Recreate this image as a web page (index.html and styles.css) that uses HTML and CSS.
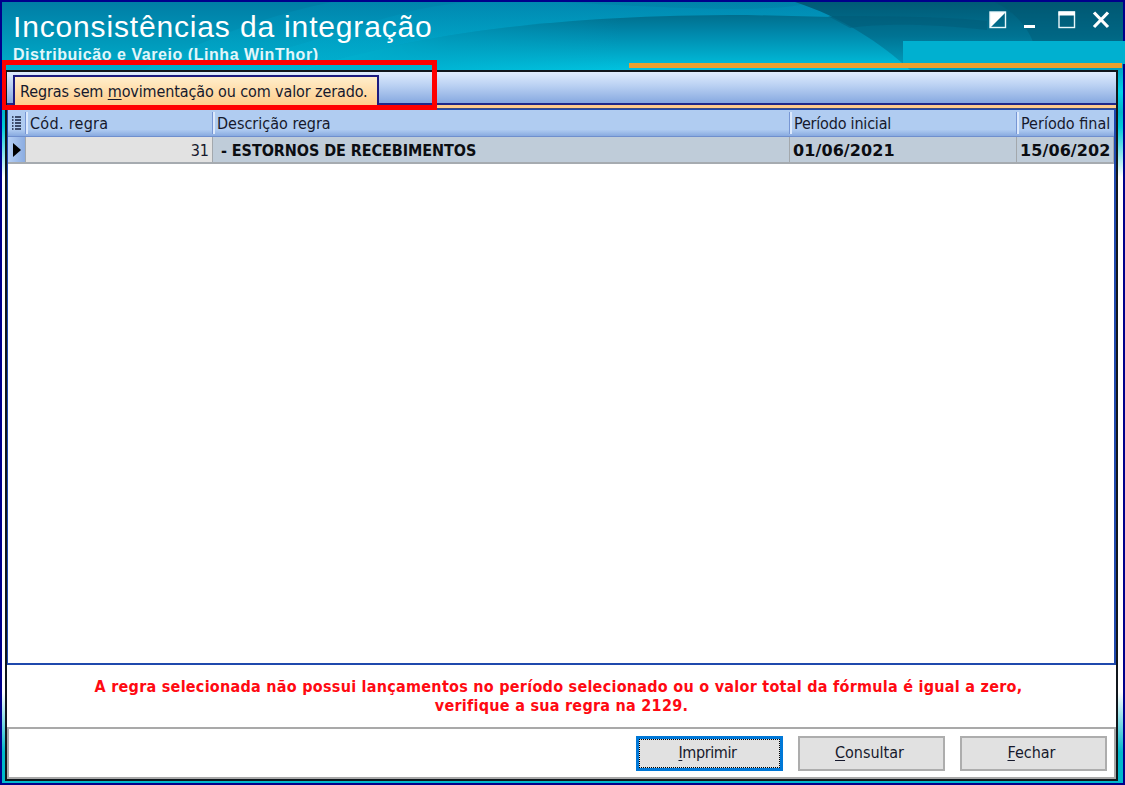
FILE: index.html
```html
<!DOCTYPE html>
<html lang="pt-BR">
<head>
  <meta charset="UTF-8">
  <meta name="viewport" content="width=device-width, initial-scale=1.0">
  <title>Inconsistências da integração</title>
  <link rel="stylesheet" href="styles.css">
</head>
<body>
  <div class="window">
    <header class="titlebar">
      <svg class="waves" viewBox="0 0 1121 68" preserveAspectRatio="none">
        <defs>
          <linearGradient id="base" x1="0" y1="0" x2="0" y2="1">
            <stop offset="0" stop-color="#007da5"/>
            <stop offset="1" stop-color="#00adca"/>
          </linearGradient>
          <linearGradient id="sheen" x1="0" y1="0" x2="0" y2="1">
            <stop offset="0" stop-color="#008fb8"/>
            <stop offset="0.6" stop-color="#00aacd"/>
            <stop offset="1" stop-color="#00b4d3"/>
          </linearGradient>
          <linearGradient id="wave" gradientUnits="userSpaceOnUse" x1="0" y1="12" x2="0" y2="68">
            <stop offset="0" stop-color="#006d8c"/>
            <stop offset="0.35" stop-color="#0089ac"/>
            <stop offset="1" stop-color="#00c2df"/>
          </linearGradient>
          <linearGradient id="fade" gradientUnits="userSpaceOnUse" x1="330" y1="0" x2="620" y2="0">
            <stop offset="0" stop-color="#00b0ce"/>
            <stop offset="0.4" stop-color="#00a5c6" stop-opacity=".4"/>
            <stop offset="1" stop-color="#00a8c8" stop-opacity="0"/>
          </linearGradient>
          <linearGradient id="dark" x1="0" y1="0" x2="0" y2="1">
            <stop offset="0" stop-color="#005a76"/>
            <stop offset="0.5" stop-color="#007393"/>
            <stop offset="1" stop-color="#00a2c2"/>
          </linearGradient>
        </defs>
        <rect width="1121" height="68" fill="url(#base)"/>
        <path d="M200 68 C330 40 400 0 480 0 H900 V68 Z" fill="url(#sheen)" opacity=".4"/>
        <path d="M330 0 H1000 V68 H140 C200 40 260 14 330 0 Z" fill="url(#sheen)" opacity=".35"/>
        <path d="M300 68 C400 38 520 13 745 13 L950 18 V68 Z" fill="url(#wave)"/>
        <path d="M300 68 C400 38 520 13 745 13 L950 18 V68 Z" fill="url(#fade)"/>
        <path d="M560 0 H810 C780 10 700 8 560 0 Z" fill="#006f91" opacity=".2"/>
        <path d="M793 0 H1121 V68 H908 C880 42 840 15 793 0 Z" fill="url(#dark)"/>
        <path d="M826 14 C890 14 950 15 985 19 V28 C930 22 880 21 848 26 Z" fill="#005873" opacity=".4"/>
        <path d="M993 0 C1013 10 1026 26 1031 40 H1121 V0 Z" fill="#00546f" opacity=".4"/>
      </svg>
      <div class="titles">
        <h1>Inconsistências da integração</h1>
        <p>Distribuição e Varejo (Linha WinThor)</p>
      </div>
      <svg class="controls" width="124" height="20" viewBox="0 0 124 20">
        <path d="M1 2 H17 L1 18 Z" fill="#fff"/>
        <rect x="1" y="2" width="15.5" height="15.5" fill="none" stroke="#e8f7fb" stroke-width="1.4"/>
        <rect x="35" y="15" width="11" height="3" fill="#fff"/>
        <rect x="70" y="2" width="15.5" height="15.5" fill="none" stroke="#e8f7fb" stroke-width="1.4"/>
        <rect x="69.5" y="1.5" width="16.5" height="4" fill="#fff"/>
        <path d="M105 2.5 L119 17 M119 2.5 L105 17" stroke="#fff" stroke-width="3.2"/>
      </svg>
      <div class="cover"></div>
      <div class="stripe"></div>
    </header>

    <main class="client">
      <div class="tabs">
        <div class="tab">Regras sem <u>m</u>ovimentação ou com valor zerado.</div>
      </div>
      <div class="tab-line"></div>

      <div class="grid">
        <div class="row head">
          <div class="cell mark">
            <svg width="10" height="14" viewBox="0 0 10 14">
              <path d="M0 1 H1.5 M0 4 H1.5 M0 7 H1.5 M0 10 H1.5 M0 13 H1.5 M3 1 H9 M3 4 H9 M3 7 H9 M3 10 H9 M3 13 H9" stroke="#16213c" stroke-width="1.4"/>
            </svg>
          </div>
          <div class="cell wide">Cód. regra</div>
          <div class="cell">Descrição regra</div>
          <div class="cell narrow">Período inicial</div>
          <div class="cell">Período final</div>
        </div>
        <div class="row data">
          <div class="cell mark">
            <svg width="8" height="14" viewBox="0 0 8 14"><path d="M0 0 L8 7 L0 14 Z" fill="#000"/></svg>
          </div>
          <div class="cell code">31</div>
          <div class="cell desc">- ESTORNOS DE RECEBIMENTOS</div>
          <div class="cell date">01/06/2021</div>
          <div class="cell date">15/06/202</div>
        </div>
      </div>

      <div class="message">
        <p class="line1">A regra selecionada não possui lançamentos no período selecionado ou o valor total da fórmula é igual a zero,</p>
        <p>verifique a sua regra na 2129.</p>
      </div>

      <footer class="actions">
        <button class="focused"><u>I</u>mprimir</button>
        <button><u>C</u>onsultar</button>
        <button><u>F</u>echar</button>
      </footer>
    </main>
    <div class="highlight"></div>
  </div>
</body>
</html>
```
FILE: styles.css
```css
* {
  box-sizing: border-box;
}
body {
  margin: 0;
  overflow: hidden;
  font-family: "DejaVu Sans Condensed", "DejaVu Sans", sans-serif;
  font-stretch: condensed;
  font-size: 16px;
  color: #16192c;
}
h1, p {
  margin: 0;
}
u {
  text-decoration-thickness: 1px;
  text-underline-offset: 2px;
}
.window {
  position: relative;
  width: 1125px;
  height: 785px;
  border: 2px solid #00008b;
  background: linear-gradient(#00adca 70px, #00d3e8 90px, #00b5c8 110px, #00cbd9 125px, #fff 175px, #fff 690px, #00b9cb 750px);
}

/* title bar */
.titlebar {
  position: relative;
  height: 68px;
  display: flex;
  justify-content: space-between;
}
.waves {
  position: absolute;
  top: 0;
  left: 0;
  width: 100%;
  height: 100%;
}
.titles {
  position: relative;
  padding: 7px 0 0 11px;
  color: #fff;
  font-family: "Liberation Sans", Arial, sans-serif;
  white-space: nowrap;
}
.titles h1 {
  font-size: 30px;
  line-height: 36px;
  font-weight: normal;
  letter-spacing: 0.84px;
}
.titles p {
  font-size: 16px;
  line-height: 18px;
  margin-top: 1px;
  font-weight: bold;
  letter-spacing: 0.55px;
  color: #e2f6fa;
}
.controls {
  position: relative;
  margin: 8px 10px 0 0;
}
.cover {
  position: absolute;
  left: 901px;
  right: -2px;
  top: 39px;
  height: 23px;
  background: #00b0d0;
}
.stripe {
  position: absolute;
  left: 627px;
  right: 1px;
  top: 61px;
  height: 5px;
  background: #eba02e;
}

/* client area */
.client {
  width: 1113px;
  height: 711px;
  margin-left: 3px;
  border: 2px solid #10161c;
  background: #fff;
  display: flex;
  flex-direction: column;
}
.tabs {
  height: 33px;
  flex: none;
  padding: 3px 0 0 6px;
  background: linear-gradient(#dfecfe, #b9d0f2 45%, #87a9e0);
  border-bottom: 2px solid #20288a;
}
.tab {
  width: 366px;
  height: 30px;
  padding-left: 5px;
  border: 2px solid #1b1b80;
  border-bottom: 0;
  background: linear-gradient(#ffeecb, #ffcd8b);
  line-height: 29px;
  letter-spacing: -0.12px;
  white-space: nowrap;
}
.tab-line {
  height: 4px;
  flex: none;
  background: #ffcc8d;
  border-bottom: 1px solid #3c4a80;
}
.grid {
  height: 556px;
  flex: none;
  border: 1px solid #1f49ad;
  border-width: 1px 2px 2px 1px;
}
.row {
  display: grid;
  grid-template-columns: 18px 187px 577px 227px 1fr;
  white-space: nowrap;
}
.head {
  height: 27px;
  background: linear-gradient(#b0ccf1 75%, #88aae0);
  border-bottom: 1px solid #6f8fce;
}
.head .cell {
  height: 22px;
  margin-top: 2px;
  padding-left: 2px;
  line-height: 24px;
  border-left: 2px solid #dce9fc;
  box-shadow: -1px 0 #7796d4;
}
.head .wide {
  letter-spacing: 0.3px;
}
.head .narrow {
  letter-spacing: -0.2px;
}
.head .mark {
  border: 0;
  box-shadow: none;
  padding: 0;
}
.mark {
  display: flex;
  align-items: center;
  justify-content: center;
}
.data {
  height: 27px;
  line-height: 28px;
  background: #bfccd9;
  border-bottom: 2px solid #a6abb0;
}
.data .cell {
  overflow: hidden;
  border-right: 1px solid #a3a8ad;
}
.data .mark {
  background: linear-gradient(90deg, #b5cff5, #8cade1);
}
.code {
  background: #e2e2e2;
  text-align: right;
  padding-right: 3px;
}
.desc, .date {
  font-weight: bold;
  color: #0b0d12;
}
.desc {
  padding-left: 8px;
  letter-spacing: -0.07px;
}
.date {
  padding-left: 3px;
  font-family: "DejaVu Sans", sans-serif;
  font-stretch: normal;
  letter-spacing: 0.1px;
}

.message {
  height: 62px;
  flex: none;
  padding-top: 12px;
  color: #ff0a12;
  font-weight: bold;
  text-align: center;
  line-height: 19px;
  letter-spacing: 0.265px;
  white-space: nowrap;
}
.line1 {
  padding-right: 6px;
}
.actions {
  flex: 1;
  display: flex;
  justify-content: flex-end;
  gap: 15px;
  padding: 7px 7px 0 0;
  border: 2px solid #a9a9a9;
}
button {
  width: 147px;
  height: 35px;
  padding: 0 4px 2px 0;
  font: inherit;
  color: #16192c;
  background: #e1e1e1;
  border: 2px solid #adadad;
}
button.focused {
  border: 3px solid #0078d7;
  outline: 1px dotted #000;
  outline-offset: -4px;
  letter-spacing: -0.4px;
}

/* red marker around the tab */
.highlight {
  position: absolute;
  left: 0;
  top: 58px;
  width: 435px;
  height: 50px;
  border: 5px solid #f00;
  border-left-width: 4px;
}
```
